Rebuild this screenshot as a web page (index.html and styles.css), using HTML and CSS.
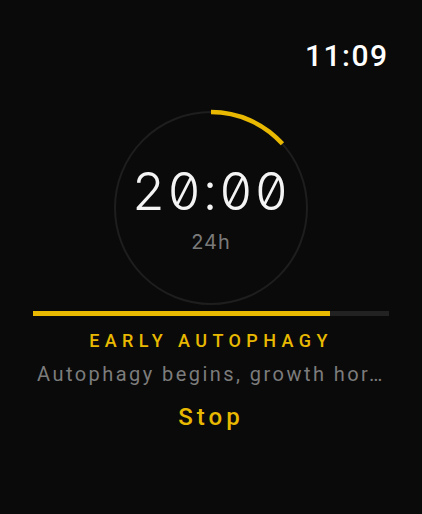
FILE: index.html
```html
<!DOCTYPE html>
<html>
<head>
<meta charset="utf-8">
<link rel="stylesheet" href="styles.css">
</head>
<body>
<div class="screen">
  <header class="top">
    <span class="clock">11:09</span>
  </header>
  <div class="ring">
    <svg class="ring-svg" width="200" height="200" viewBox="0 0 200 200">
      <circle cx="100" cy="100" r="96" fill="none" stroke="#1e1e1e" stroke-width="2"/>
      <circle cx="100" cy="100" r="96" fill="none" stroke="#e8b900" stroke-width="4.5" stroke-dasharray="80.4 603.2" transform="rotate(-90 100 100)"/>
    </svg>
    <div class="ring-text">
      <div class="timer">20:00</div>
      <div class="goal">24h</div>
    </div>
  </div>
  <div class="bar"><div class="bar-fill" style="width:83.4%"></div></div>
  <div class="phase">EARLY AUTOPHAGY</div>
  <div class="desc">Autophagy begins, growth hor…</div>
  <div class="stop">Stop</div>
</div>
</body>
</html>
```
FILE: styles.css
```css
html, body {
  margin: 0;
  padding: 0;
  background: #0a0a0a;
}
.screen {
  width: 422px;
  height: 514px;
  display: flex;
  flex-direction: column;
  align-items: center;
  font-family: Roboto, "Noto Sans", sans-serif;
  background: #0a0a0a;
  color: #fff;
}
.top {
  align-self: stretch;
  display: flex;
  justify-content: flex-end;
  padding: 41px 35px 0 0;
}
.clock {
  font-size: 30px;
  line-height: 30px;
  font-weight: 500;
  letter-spacing: 1.5px;
  margin-right: -1.5px;
  color: #fff;
}
.ring {
  margin-top: 37px;
  width: 200px;
  height: 200px;
  display: grid;
}
.ring-svg, .ring-text {
  grid-area: 1 / 1;
}
.ring-text {
  display: flex;
  flex-direction: column;
  align-items: center;
  padding-top: 58px;
}
.timer {
  font-family: Inter, Roboto, sans-serif;
  font-weight: 300;
  font-size: 52px;
  line-height: 52px;
  letter-spacing: 2px;
  font-variant-numeric: tabular-nums slashed-zero;
  font-feature-settings: "tnum" 1, "zero" 1;
  color: #f4f4f4;
}
.goal {
  margin-top: 14px;
  font-family: Inter, Roboto, sans-serif;
  font-size: 20px;
  line-height: 20px;
  letter-spacing: 1px;
  color: #7a7a7a;
}
.bar {
  margin-top: 3px;
  width: 356px;
  height: 4.5px;
  background: #222;
}
.bar-fill {
  height: 100%;
  background: #e8b900;
}
.phase {
  margin-top: 16px;
  font-size: 18px;
  line-height: 18px;
  letter-spacing: 5.4px;
  font-weight: 500;
  color: #e8b900;
}
.desc {
  margin-top: 14px;
  font-size: 20px;
  line-height: 20px;
  letter-spacing: 2.45px;
  color: #7c7c7c;
  white-space: nowrap;
  text-align: center;
}
.stop {
  margin-top: 21px;
  font-size: 24px;
  line-height: 24px;
  font-weight: 500;
  letter-spacing: 4px;
  color: #e8b900;
}
```
